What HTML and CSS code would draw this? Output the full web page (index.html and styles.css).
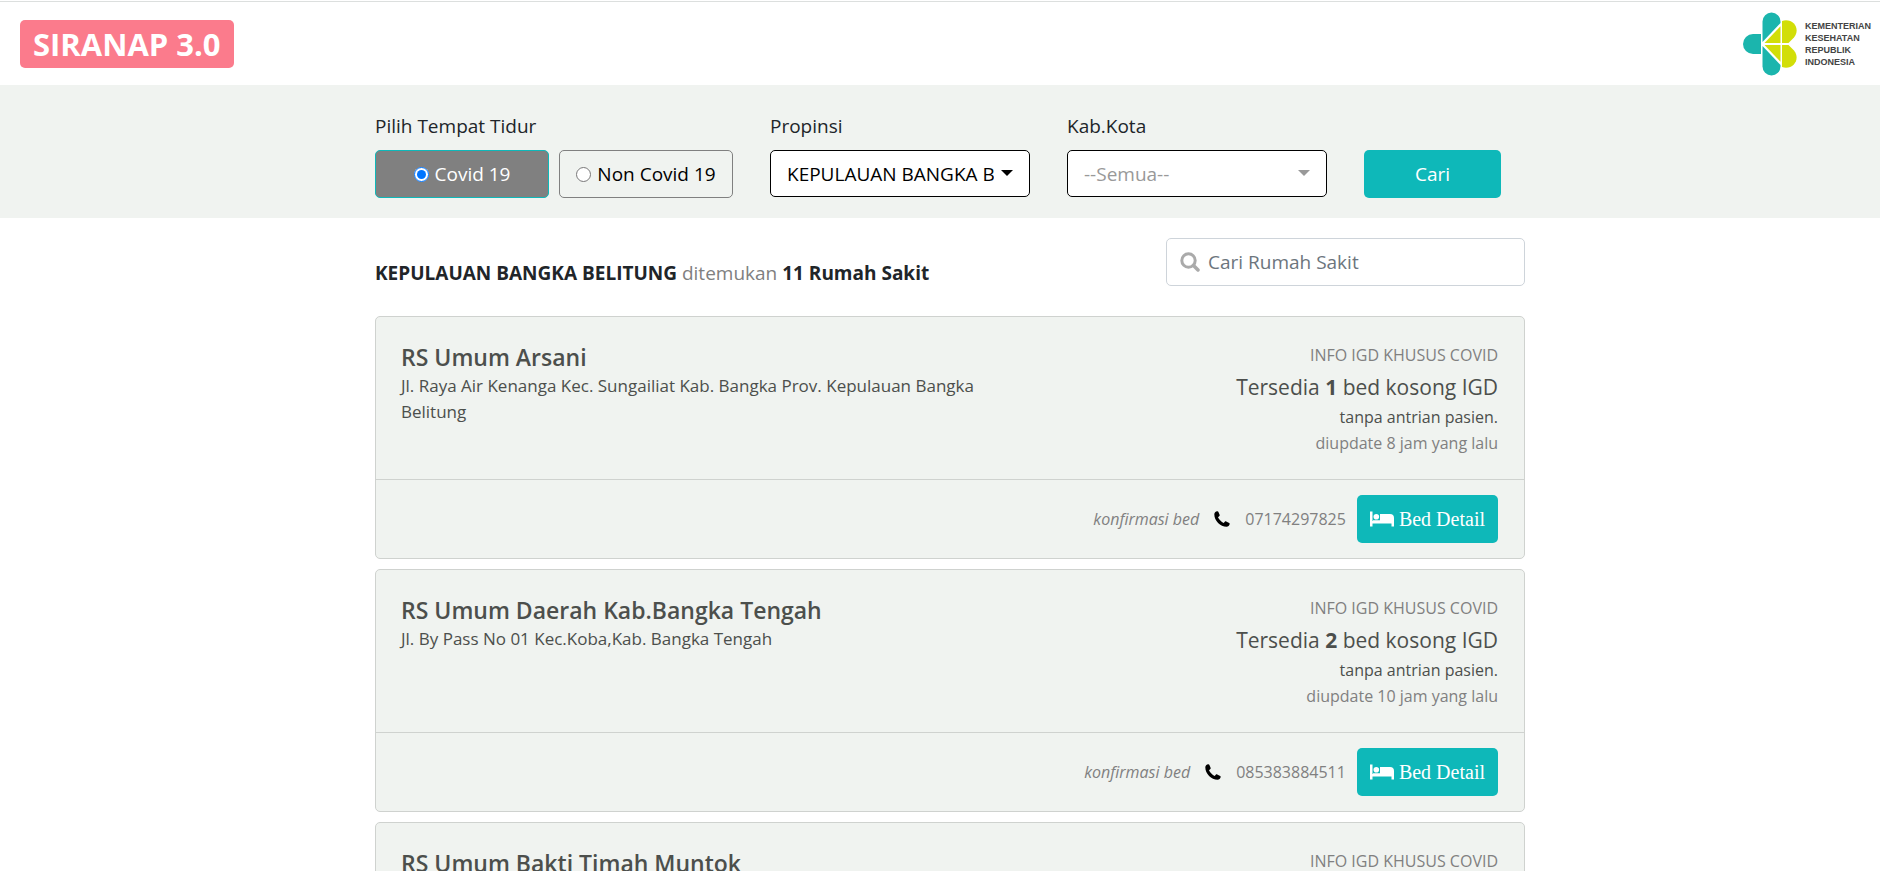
FILE: index.html
```
<!DOCTYPE html>
<html lang="id">
<head>
  <meta charset="UTF-8" />
  <meta name="viewport" content="width=device-width, initial-scale=1" />
  <title>SIRANAP 3.0</title>
  <link rel="stylesheet" href="styles.css">
</head>
<body>
  <svg class="sprite" width="0" height="0" aria-hidden="true">
    <symbol id="phone" viewBox="0 0 16 16">
      <path d="M3.200.3C1.600.6.3 1.700.3 3.300.3 9.800 6.300 15.700 12.600 15.700c1.500 0 2.800-1.200 3.100-2.800.1-.5-.1-.8-.5-1L12.200 10.400c-.5-.2-.9-.1-1.200.2L9.700 12C7.300 10.900 5.100 8.700 4 6.300L5.400 5c.3-.3.4-.7.2-1.200L4.300.8C4.100.4 3.700.2 3.200.3z"/>
    </symbol>
    <symbol id="bed" viewBox="0 0 24 16">
      <path d="M0 .500h2.500V10H21.500V8.500H24V15.500h-2.500V12.500h-19v3H0z"/>
      <circle cx="6.300" cy="5.800" r="2.800"/>
      <path d="M10 3h10a4 4 0 0 1 4 4v4H3V9.300h7z"/>
    </symbol>
  </svg>

  <header class="topbar">
    <a class="brand" href="#">SIRANAP 3.0</a>
    <div class="logo">
      <svg class="logo-mark" viewBox="0 0 54 64" aria-hidden="true">
        <g fill="#1bb5ad">
          <path d="M19.500 30V9.500a9 9 0 0 1 18 0V11z"/>
          <path d="M19.500 34V54.500a9 9 0 0 0 18 0V53z"/>
          <path d="M18 22H10a10 10 0 0 0 0 20h8z"/>
        </g>
        <g fill="#d2de08">
          <path d="M21.500 31L37.500 14.200V31z"/>
          <path d="M39 12V31H45.500L51 25.500C58 17 50 5.500 39 9z"/>
          <path d="M21.500 33L37.500 49.800V33z"/>
          <path d="M39 52V33H45.500L51 38.500C58 47 50 58.500 39 55z"/>
        </g>
      </svg>
      <p class="logo-text">KEMENTERIAN<br>KESEHATAN<br>REPUBLIK<br>INDONESIA</p>
    </div>
  </header>

  <section class="filter">
    <form class="container filter-form">
      <fieldset class="field">
        <legend class="field-label">Pilih Tempat Tidur</legend>
        <div class="radio-group">
          <label class="radio radio-active"><input type="radio" name="jenis" checked />Covid 19</label>
          <label class="radio"><input type="radio" name="jenis" />Non Covid 19</label>
        </div>
      </fieldset>
      <div class="field">
        <label class="field-label" for="propinsi">Propinsi</label>
        <div class="select">
          <select id="propinsi">
            <option>KEPULAUAN BANGKA BELITUNG</option>
          </select>
        </div>
      </div>
      <div class="field">
        <label class="field-label" for="kabkota">Kab.Kota</label>
        <div class="select select-empty">
          <select id="kabkota">
            <option>--Semua--</option>
          </select>
        </div>
      </div>
      <button class="btn btn-search" type="button">Cari</button>
    </form>
  </section>

  <main class="container">
    <div class="summary">
      <p class="summary-text"><strong>KEPULAUAN BANGKA BELITUNG</strong> ditemukan <strong>11 Rumah Sakit</strong></p>
      <div class="search">
        <svg class="search-icon" viewBox="0 0 20 20" aria-hidden="true">
          <circle cx="8.500" cy="8.500" r="6.700" fill="none" stroke="#aaa" stroke-width="3"/>
          <path d="M13.500 13.500L18 18" stroke="#aaa" stroke-width="3.500" stroke-linecap="round"/>
        </svg>
        <input type="text" placeholder="Cari Rumah Sakit" aria-label="Cari Rumah Sakit" />
      </div>
    </div>

    <article class="card">
      <div class="card-body">
        <div class="hospital">
          <h5 class="hospital-name">RS Umum Arsani</h5>
          <p class="hospital-address">Jl. Raya Air Kenanga Kec. Sungailiat Kab. Bangka Prov. Kepulauan Bangka Belitung</p>
        </div>
        <div class="info">
          <p class="info-small">INFO IGD KHUSUS COVID</p>
          <p class="info-bed">Tersedia <b>1</b> bed kosong IGD</p>
          <p class="info-queue">tanpa antrian pasien.</p>
          <p class="info-small">diupdate 8 jam yang lalu</p>
        </div>
      </div>
      <div class="card-footer">
        <em>konfirmasi bed</em>
        <svg class="icon-phone" aria-hidden="true"><use href="#phone"/></svg>
        <span class="phone-number">07174297825</span>
        <button class="btn btn-detail" type="button"><svg class="icon-bed" aria-hidden="true"><use href="#bed"/></svg>Bed Detail</button>
      </div>
    </article>

    <article class="card">
      <div class="card-body">
        <div class="hospital">
          <h5 class="hospital-name">RS Umum Daerah Kab.Bangka Tengah</h5>
          <p class="hospital-address">Jl. By Pass No 01 Kec.Koba,Kab. Bangka Tengah</p>
        </div>
        <div class="info">
          <p class="info-small">INFO IGD KHUSUS COVID</p>
          <p class="info-bed">Tersedia <b>2</b> bed kosong IGD</p>
          <p class="info-queue">tanpa antrian pasien.</p>
          <p class="info-small">diupdate 10 jam yang lalu</p>
        </div>
      </div>
      <div class="card-footer">
        <em>konfirmasi bed</em>
        <svg class="icon-phone" aria-hidden="true"><use href="#phone"/></svg>
        <span class="phone-number">085383884511</span>
        <button class="btn btn-detail" type="button"><svg class="icon-bed" aria-hidden="true"><use href="#bed"/></svg>Bed Detail</button>
      </div>
    </article>

    <article class="card">
      <div class="card-body">
        <div class="hospital">
          <h5 class="hospital-name">RS Umum Bakti Timah Muntok</h5>
        </div>
        <div class="info">
          <p class="info-small">INFO IGD KHUSUS COVID</p>
        </div>
      </div>
    </article>
  </main>
</body>
</html>
```
FILE: styles.css
```
* {
  box-sizing: border-box;
}
body {
  margin: 0;
  font-family: "Segoe UI", "Open Sans", "Noto Sans", sans-serif;
  font-size: 19px;
  line-height: 30px;
  color: #212529;
  background-color: #fff;
}
body::-webkit-scrollbar {
  display: none;
}
p,
h5 {
  margin: 0;
}
input,
select,
button {
  font-family: inherit;
  font-size: inherit;
}
.sprite {
  position: absolute;
}
.container {
  max-width: 1170px;
  margin: 0 auto;
  padding-left: 20px;
}

/* header */
.topbar {
  display: flex;
  justify-content: space-between;
  align-items: center;
  margin-top: 1px;
  padding: 10px 9px 9px 20px;
  border-top: 1px solid #dcdfde;
}
.brand {
  padding: 8px 13px;
  border-radius: 5px;
  background-color: #fb7b8c;
  color: #fff;
  font-size: 31px;
  line-height: 32px;
  font-weight: bold;
  text-decoration: none;
}
.logo {
  display: flex;
  align-items: center;
  gap: 8px;
}
.logo-mark {
  width: 54px;
  height: 64px;
}
.logo-text {
  font-family: "Liberation Sans", Arial, sans-serif;
  font-size: 9px;
  line-height: 12px;
  font-weight: bold;
  color: #444;
}

/* filter */
.filter {
  padding: 26px 0 20px;
  background-color: #f0f3f0;
}
.filter-form {
  display: flex;
  flex-wrap: wrap;
  align-items: flex-start;
  gap: 37px;
}
.field {
  margin: 0;
  padding: 0;
  border: 0;
}
.field-label {
  display: block;
  padding: 0;
  margin-bottom: 9px;
}
.radio-group {
  display: flex;
  gap: 10px;
}
.radio {
  display: flex;
  align-items: center;
  justify-content: center;
  gap: 6px;
  width: 174px;
  height: 48px;
  border: 1px solid #808080;
  border-radius: 5px;
  color: #000;
}
.radio input {
  width: 15px;
  height: 15px;
  margin: 0;
}
.radio-active {
  border-color: #0eb8b9;
  background-color: #808080;
  color: #fff;
}
.select {
  position: relative;
}
.select select {
  display: block;
  width: 260px;
  height: 47px;
  padding: 0 35px 0 16px;
  border: 1px solid #000;
  border-radius: 5px;
  background-color: #fff;
  color: #000;
  appearance: none;
}
.select::after {
  content: "";
  position: absolute;
  top: 20px;
  right: 17px;
  border: 6px solid transparent;
  border-top-color: #000;
  border-bottom: 0;
}
.select-empty select {
  color: #999;
}
.select-empty::after {
  border-top-color: #999;
}
.btn {
  height: 48px;
  border: 0;
  border-radius: 5px;
  background-color: #0eb8b9;
  color: #fff;
}
.btn-search {
  align-self: flex-end;
  width: 137px;
}

/* result */
.summary {
  display: flex;
  justify-content: space-between;
  align-items: flex-end;
  padding: 20px 0 30px;
}
.summary-text {
  line-height: 26px;
  color: #808080;
}
.summary-text strong {
  color: #212529;
}
.search {
  display: flex;
  align-items: center;
  gap: 8px;
  width: 359px;
  height: 48px;
  padding: 0 13px;
  border: 1px solid #ced4da;
  border-radius: 5px;
}
.search-icon {
  width: 20px;
  height: 20px;
}
.search input {
  flex: 1;
  min-width: 0;
  padding: 0;
  border: 0;
  outline: 0;
}
.search input::placeholder {
  color: #6c757d;
}
.card {
  margin-bottom: 10px;
  border: 1px solid #cfd2cf;
  border-radius: 5px;
  background-color: #f0f3f0;
  color: #4c4f4c;
}
.card-body {
  display: flex;
  justify-content: space-between;
  padding: 25px 26px 23px 25px;
}
.hospital {
  width: 575px;
}
.hospital-name {
  font-size: 23px;
  line-height: 31px;
  font-weight: 600;
}
.hospital-address {
  font-size: 17px;
  line-height: 26px;
}
.info {
  text-align: right;
}
.info-small {
  font-size: 16px;
  line-height: 26px;
  color: #808080;
}
.info-bed {
  padding: 4px 0 2px;
  font-size: 21px;
}
.info-queue {
  font-size: 16px;
  line-height: 26px;
}
.card-footer {
  display: flex;
  justify-content: flex-end;
  align-items: center;
  padding: 15px 26px 15px 25px;
  border-top: 1px solid #cfd2cf;
  font-size: 16px;
  color: #808080;
}
.icon-phone {
  width: 16px;
  height: 16px;
  margin: 0 15px;
  fill: #000;
}
.phone-number {
  margin-right: 11px;
}
.btn-detail {
  display: flex;
  align-items: center;
  gap: 5px;
  padding: 0 13px;
  font-family: "Liberation Serif", "Times New Roman", serif;
  font-size: 20px;
}
.icon-bed {
  width: 24px;
  height: 16px;
  fill: #fff;
}
```
